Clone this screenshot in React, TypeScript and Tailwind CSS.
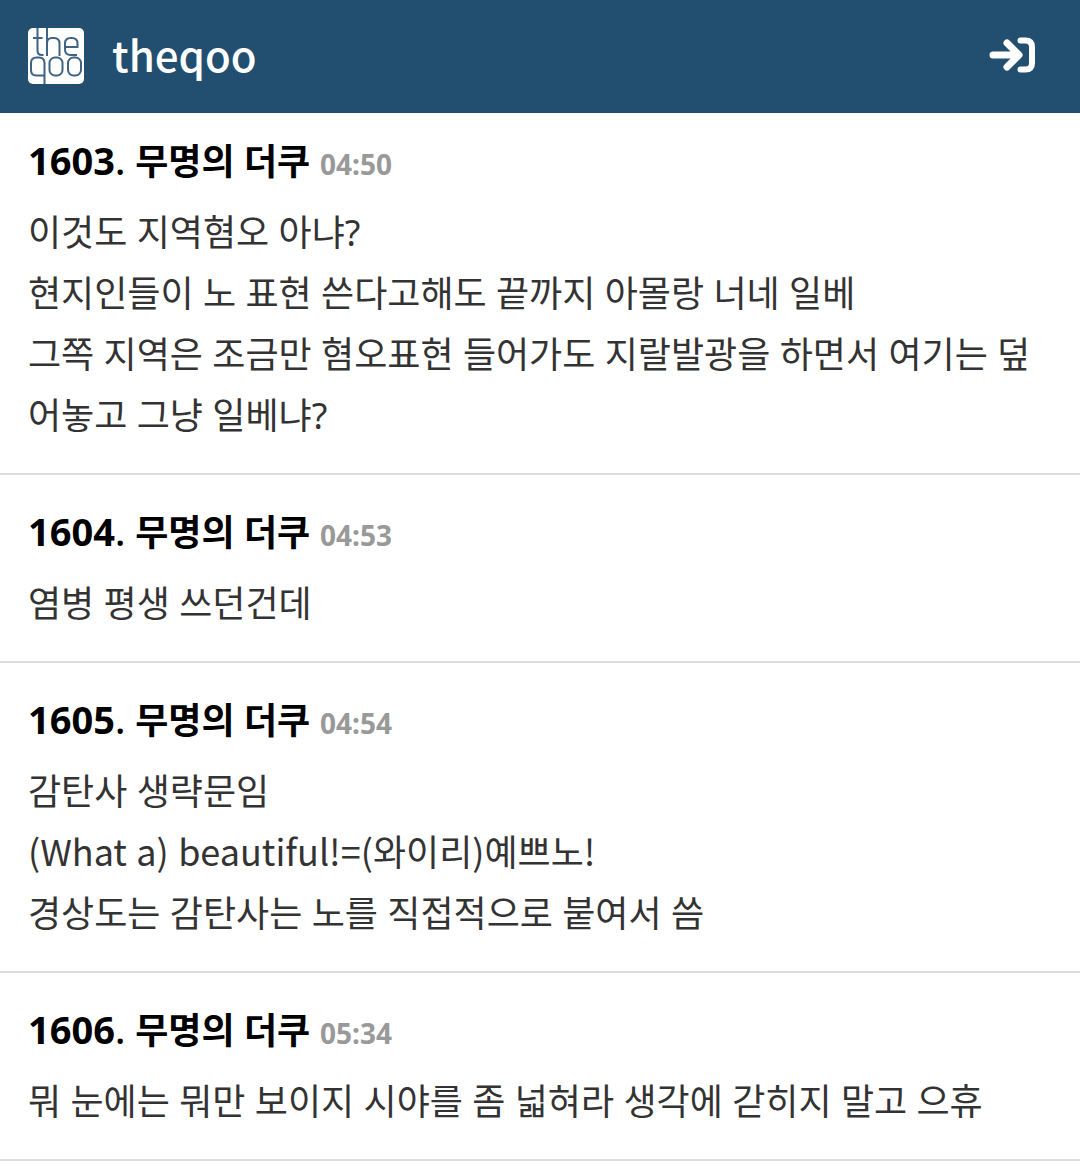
import React from 'react';

interface Comment {
    id: number;
    author: string;
    time: string;
    lines: string[];
}

const COMMENTS: Comment[] = [
    {
        id: 1603,
        author: '무명의 더쿠',
        time: '04:50',
        lines: [
            '이것도 지역혐오 아냐?',
            '현지인들이 노 표현 쓴다고해도 끝까지 아몰랑 너네 일베',
            '그쪽 지역은 조금만 혐오표현 들어가도 지랄발광을 하면서 여기는 덮어놓고 그냥 일베냐?',
        ],
    },
    { id: 1604, author: '무명의 더쿠', time: '04:53', lines: ['염병 평생 쓰던건데'] },
    {
        id: 1605,
        author: '무명의 더쿠',
        time: '04:54',
        lines: [
            '감탄사 생략문임',
            '(What a) beautiful!=(와이리)예쁘노!',
            '경상도는 감탄사는 노를 직접적으로 붙여서 씀',
        ],
    },
    {
        id: 1606,
        author: '무명의 더쿠',
        time: '05:34',
        lines: ['뭐 눈에는 뭐만 보이지 시야를 좀 넓혀라 생각에 갇히지 말고 으휴'],
    },
];

const Logo: React.FC = () => (
    <svg viewBox="0 0 56 56" className="w-14 h-14" aria-hidden="true">
        <rect width="56" height="56" rx="5" fill="#fff" />
        <g fill="none" stroke="#3f6380" strokeWidth="2">
            <path d="M9.500 0v22.500q0 4.500 4.500 4.500h1.500M5 10h9.500" />
            <path d="M19 0v28M19 15q0-5 5-5h2q5.500 0 5.500 5.500v12.500" />
            <path d="M37 19h12.500v-3.500q0-5.500-5.500-5.500h-1.500q-5.500 0-5.500 5.500v6q0 5.500 5.500 5.500h6.500" />
            <path d="M16.500 56V35q0-5.500-5.500-5.500H8.500q-5.500 0-5.500 5.500v7q0 5.500 5.500 5.500h8" />
            <rect x="21.500" y="29.500" width="13" height="18" rx="5.500" />
            <rect x="40" y="29.500" width="13" height="18" rx="5.500" />
        </g>
    </svg>
);

const LoginIcon: React.FC = () => (
    <svg viewBox="0 0 48 36" className="w-12 h-9" fill="none" stroke="currentColor" aria-hidden="true">
        <path d="M5 18h25M19 6l12 12-12 12" strokeWidth="7" strokeLinecap="round" strokeLinejoin="round" />
        <path d="M32.500 3.500h5q6.500 0 6.500 6.500v16q0 6.500-6.500 6.500h-5" strokeWidth="6" strokeLinecap="round" />
    </svg>
);

// Latin words and punctuation use the Korean family's own Latin letters
const CommentLine: React.FC<{ text: string }> = ({ text }) => (
    <p>
        {text.split(/([A-Za-z()!=]+)/).map((part, i) =>
            i % 2 === 1
                ? <span key={i} className="leading-none font-['Noto_Sans_CJK_KR',sans-serif]">{part}</span>
                : part
        )}
    </p>
);

const CommentItem: React.FC<{ comment: Comment }> = ({ comment }) => (
    <li className="px-7 pt-[26px] pb-[27px] border-b-2 border-[#dddddd]">
        <h2 className="text-[38px] leading-[60px] font-bold text-black">
            {comment.id}<span className="font-medium leading-none">.</span>{' '}
            <span className="text-[36px] leading-none">{comment.author}</span>{' '}
            <time className="text-[28px] leading-none text-[#999999]">{comment.time}</time>
        </h2>
        <div className="mt-3 text-[36px] leading-[61px] text-[#333333] break-all">
            {comment.lines.map(line => <CommentLine key={line} text={line} />)}
        </div>
    </li>
);

export default function App() {
    return (
        <div className="min-h-screen bg-white font-['Noto_Sans','Noto_Sans_CJK_KR',sans-serif]">
            <header className="h-[113px] px-7 pb-0.5 flex items-center justify-between bg-[#224f70] text-white">
                <a href="#" className="flex items-center gap-7">
                    <Logo />
                    <span className="text-[42px] leading-[52px] pb-1 font-medium font-['Noto_Sans_CJK_KR',sans-serif]">theqoo</span>
                </a>
                <button type="button" aria-label="로그인" className="px-4 pb-0.5">
                    <LoginIcon />
                </button>
            </header>
            <ul className="-mt-[9px]">
                {COMMENTS.map(comment => <CommentItem key={comment.id} comment={comment} />)}
            </ul>
        </div>
    );
}
